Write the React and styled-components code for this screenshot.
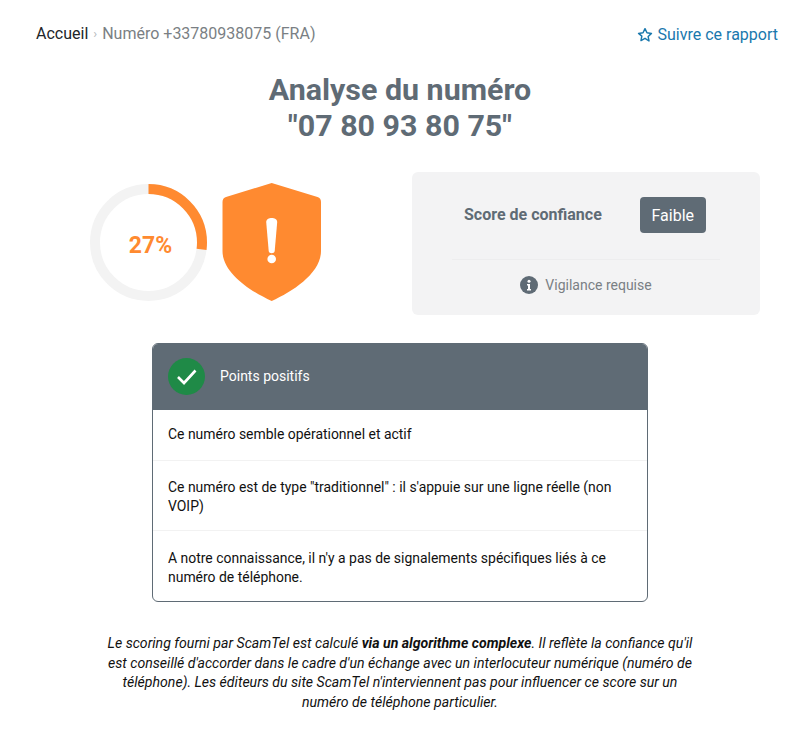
import React from "react";
import styled, { createGlobalStyle } from "styled-components";

const GlobalStyle = createGlobalStyle`
  * { box-sizing: border-box; }
  html, body { margin: 0; padding: 0; background: #fff; }
  body { font-family: Roboto, "Liberation Sans", sans-serif; color: #000; }
`;

const Page = styled.div`
  width: 800px;
  height: 756px;
  overflow: hidden;
  padding-top: 23px;
`;

const TopBar = styled.div`
  display: flex;
  justify-content: space-between;
  align-items: center;
  padding: 0 22px 0 36px;
  height: 21px;
`;

const Crumbs = styled.div`
  display: flex;
  align-items: center;
  font-size: 16px;
  color: #7a7f84;
`;

const CrumbLink = styled.span`
  color: #212529;
`;

const CrumbSep = styled.span`
  color: #b5b9bd;
  font-size: 13px;
  margin: 0 5px;
`;

const FollowLink = styled.div`
  display: flex;
  align-items: center;
  gap: 5px;
  font-size: 16px;
  color: #1a78ad;
  margin-top: 2px;
`;

const Title = styled.h1`
  margin: 28px 0 0;
  text-align: center;
  font-size: 30.400px;
  line-height: 36px;
  font-weight: 700;
  color: #5f6b75;
`;

const ScoreRow = styled.div`
  display: flex;
  margin-top: 28px;
  padding-left: 90px;
`;

const Visuals = styled.div`
  display: flex;
  align-items: flex-start;
  gap: 15px;
  width: 322px;
  padding-top: 11px;
`;

const Gauge = styled.div`
  position: relative;
  width: 117px;
  height: 120px;
  display: flex;
  align-items: center;
  justify-content: center;
`;

const GaugeSvg = styled.svg`
  position: absolute;
  top: 1px;
  left: 0;
`;

const GaugeValue = styled.span`
  font-size: 23px;
  font-weight: 700;
  color: #ff8a30;
  position: relative;
  top: 2px;
  left: 2px;
`;

const ScoreCard = styled.div`
  width: 348px;
  height: 143px;
  background: #f3f3f4;
  border-radius: 6px;
  padding: 25px 40px 0;
`;

const ScoreLine = styled.div`
  display: flex;
  align-items: center;
  padding-left: 12px;
  gap: 38px;
`;

const ScoreLabel = styled.span`
  font-size: 16px;
  font-weight: 700;
  color: #5f6b75;
  margin-bottom: 2px;
`;

const Badge = styled.span`
  display: inline-flex;
  align-items: center;
  justify-content: center;
  width: 66px;
  height: 36px;
  background: #5f6b75;
  color: #fff;
  border-radius: 4px;
  font-size: 16px;
`;

const Divider = styled.div`
  height: 1px;
  background: #ededee;
  margin-top: 26px;
`;

const Notice = styled.div`
  display: flex;
  align-items: center;
  justify-content: center;
  gap: 7px;
  margin-top: 16px;
  font-size: 14px;
  color: #7a7f84;
`;

const Panel = styled.div`
  width: 496px;
  margin: 28px auto 0;
  border: 1px solid #5f6b75;
  border-radius: 6px;
  overflow: hidden;
`;

const PanelHead = styled.div`
  display: flex;
  align-items: center;
  gap: 15px;
  height: 66px;
  padding: 0 0 2px 15px;
  background: #5f6b75;
  color: #fff;
  font-size: 14px;
`;

const PanelRow = styled.div`
  padding: ${(p) => p.$top}px 15px ${(p) => p.$bottom}px;
  font-size: 13.950px;
  line-height: 19px;
  color: #111;
  border-top: ${(p) => (p.$first ? "none" : "1px solid #f2f2f2")};
`;

const Footnote = styled.p`
  width: 600px;
  margin: 32px auto 0;
  text-align: center;
  font-size: 14.100px;
  line-height: 19.700px;
  font-style: italic;
  color: #111;
`;

const R = 53.500;
const C = 2 * Math.PI * R;

const App = () => (
  <Page>
    <GlobalStyle />
    <TopBar>
      <Crumbs>
        <CrumbLink>Accueil</CrumbLink>
        <CrumbSep>›</CrumbSep>
        Numéro +33780938075 (FRA)
      </Crumbs>
      <FollowLink>
        <svg width="16" height="16" viewBox="0 0 24 24" fill="none" stroke="#1a78ad" strokeWidth="2.200" strokeLinejoin="round">
          <path d="M12 2.500l2.950 6.200 6.750.9-4.950 4.700 1.250 6.700L12 17l-6 3.300 1.250-6.700L2.300 9.600l6.750-.9z" />
        </svg>
        Suivre ce rapport
      </FollowLink>
    </TopBar>
    <Title>
      Analyse du numéro
      <br />
      "07 80 93 80 75"
    </Title>
    <ScoreRow>
      <Visuals>
        <Gauge>
          <GaugeSvg width="117" height="117" viewBox="0 0 117 117">
            <circle cx="58.500" cy="58.500" r={R} fill="none" stroke="#f3f3f3" strokeWidth="10" />
            <circle
              cx="58.500"
              cy="58.500"
              r={R}
              fill="none"
              stroke="#ff8a30"
              strokeWidth="10"
              strokeDasharray={`${C * 0.27} ${C}`}
              transform="rotate(-90 58.500 58.500)"
            />
          </GaugeSvg>
          <GaugeValue>27%</GaugeValue>
        </Gauge>
        <svg width="100" height="118" viewBox="0 0 100 118">
          <path
            d="M49.700 0 L95.500 14 Q99 15 99 19 L99 68 C99 90 71.500 108 49.700 118 C28 108 0.500 90 0.500 68 L0.500 19 Q0.500 15 4 14 Z"
            fill="#ff8a30"
          />
          <path d="M44.200 39 C44.200 33.500 55.200 33.500 55.200 39 L52.700 68 C52.400 71 47 71 46.700 68 Z" fill="#fff" />
          <circle cx="49.700" cy="76" r="4.300" fill="#fff" />
        </svg>
      </Visuals>
      <ScoreCard>
        <ScoreLine>
          <ScoreLabel>Score de confiance</ScoreLabel>
          <Badge>Faible</Badge>
        </ScoreLine>
        <Divider />
        <Notice>
          <svg width="18" height="18" viewBox="0 0 18 18">
            <circle cx="9" cy="9" r="9" fill="#5f6b75" />
            <circle cx="9" cy="5.200" r="1.500" fill="#fff" />
            <path d="M7 8h3v5h1v1.500H7V13h1V9.500H7z" fill="#fff" />
          </svg>
          Vigilance requise
        </Notice>
      </ScoreCard>
    </ScoreRow>
    <Panel>
      <PanelHead>
        <svg width="37" height="37" viewBox="0 0 37 37">
          <circle cx="18.500" cy="18.500" r="18.500" fill="#1f8a47" />
          <path d="M10 19l6 6 L27.500 12.500" fill="none" stroke="#fff" strokeWidth="2.600" />
        </svg>
        Points positifs
      </PanelHead>
      <PanelRow $first $top={15} $bottom={16}>Ce numéro semble opérationnel et actif</PanelRow>
      <PanelRow $top={17} $bottom={14}>Ce numéro est de type "traditionnel" : il s'appuie sur une ligne réelle (non VOIP)</PanelRow>
      <PanelRow $top={18} $bottom={14}>A notre connaissance, il n'y a pas de signalements spécifiques liés à ce numéro de téléphone.</PanelRow>
    </Panel>
    <Footnote>
      Le scoring fourni par ScamTel est calculé <b>via un algorithme complexe</b>. Il reflète la confiance qu'il est
      conseillé d'accorder dans le cadre d'un échange avec un interlocuteur numérique (numéro de téléphone). Les éditeurs
      du site ScamTel n'interviennent pas pour influencer ce score sur un numéro de téléphone particulier.
    </Footnote>
  </Page>
);

export default App;
